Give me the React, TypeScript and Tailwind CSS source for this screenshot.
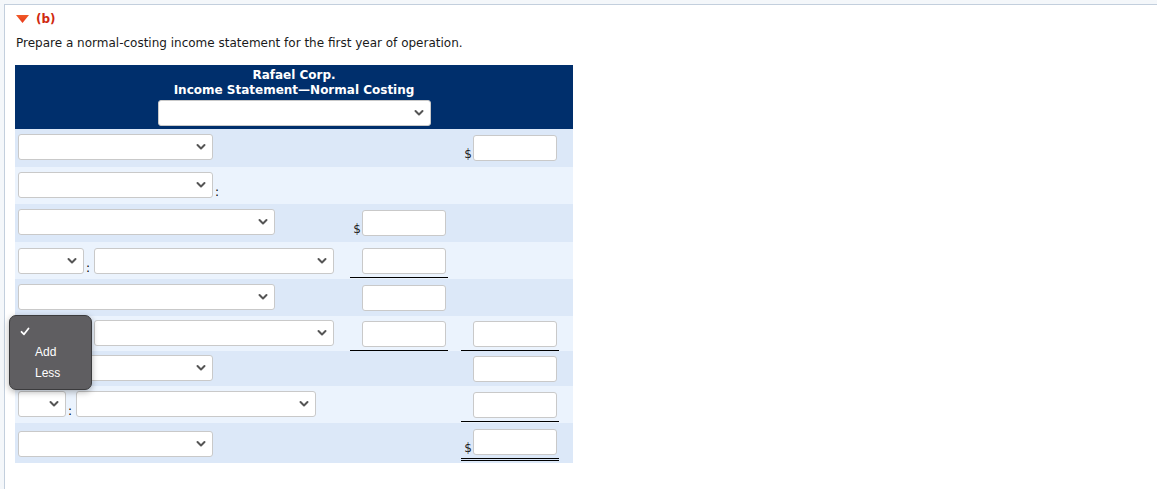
import React from "react";

const font = { fontFamily: "Verdana, 'DejaVu Sans', sans-serif" };

function Chevron() {
  return (
    <svg width="10" height="7" viewBox="0 0 10 7" className="absolute right-[6px] top-1/2 -translate-y-1/2">
      <path d="M1.5 1.5 L5 5 L8.5 1.5" fill="none" stroke="#555" strokeWidth="2" strokeLinecap="round" strokeLinejoin="round" />
    </svg>
  );
}

function Select({ w }: { w: string }) {
  return (
    <div className={`relative h-[26px] ${w} rounded-[3px] border border-[#c9c9c9] bg-white`}>
      <Chevron />
    </div>
  );
}

function Input() {
  return <div className="h-[26px] w-[84px] rounded-[3px] border border-[#c9c9c9] bg-white" />;
}

type Cell = { input?: boolean; dollar?: boolean; line?: "single" | "double" };

function Amount({ c }: { c?: Cell }) {
  return (
    <div className="flex w-[100px] flex-col items-stretch">
      <div className="flex h-[32px] items-end justify-end pr-[3px]">
        {c?.dollar && <span className="mr-[1px] text-[12px] leading-[14px] text-[#222]">$</span>}
        {c?.input && <Input />}
      </div>
      <div
        className={`mx-[1px] mt-[3px] ${
          c?.line === "single" ? "border-t border-black" : c?.line === "double" ? "h-[3px] border-y border-black" : ""
        }`}
      />
    </div>
  );
}

type Row = { h: string; dark: boolean; left: React.ReactNode; b?: Cell; c?: Cell; pt: string };

function Pair({ small }: { small: string }) {
  return (
    <div className="flex">
      <Select w={small} />
      <span className="mx-[2px] self-end text-[12px] leading-[12px] text-black">:</span>
      <div className="ml-[2px]">
        <Select w="w-[240px]" />
      </div>
    </div>
  );
}

export default function App() {
  const rows: Row[] = [
    { h: "h-[38px]", pt: "pt-[5px]", dark: true, left: <Select w="w-[195px]" />, c: { input: true, dollar: true } },
    {
      h: "h-[37px]",
      pt: "pt-[5px]",
      dark: false,
      left: (
        <div className="flex">
          <Select w="w-[195px]" />
          <span className="mx-[2px] self-end text-[12px] leading-[12px] text-black">:</span>
        </div>
      ),
    },
    { h: "h-[38px]", pt: "pt-[5px]", dark: true, left: <Select w="w-[257px]" />, b: { input: true, dollar: true } },
    { h: "h-[37px]", pt: "pt-[6px]", dark: false, left: <Pair small="w-[66px]" />, b: { input: true, line: "single" } },
    { h: "h-[37px]", pt: "pt-[5px]", dark: true, left: <Select w="w-[257px]" />, b: { input: true } },
    {
      h: "h-[35px]",
      pt: "pt-[4px]",
      dark: false,
      left: <Pair small="w-[66px]" />,
      b: { input: true, line: "single" },
      c: { input: true, line: "single" },
    },
    { h: "h-[35px]", pt: "pt-[4px]", dark: true, left: <Select w="w-[195px]" />, c: { input: true } },
    { h: "h-[37px]", pt: "pt-[5px]", dark: false, left: <Pair small="w-[48px]" />, c: { input: true, line: "single" } },
    {
      h: "h-[40px]",
      pt: "pt-[5px]",
      dark: true,
      left: <div className="pt-[3px]"><Select w="w-[195px]" /></div>,
      c: { input: true, dollar: true, line: "double" },
    },
  ];

  return (
    <div className="min-h-screen bg-[#f4f7fa] pl-[4px] pt-[4px]" style={font}>
      <div className="relative min-h-[485px] border-l border-t border-[#c3cfdd] bg-white pl-[10px]">
        <div className="mt-[7px] flex h-[14px] items-center pl-[1px]">
          <svg width="13" height="8" viewBox="0 0 13 8" className="mr-[7px]">
            <defs>
              <linearGradient id="tri" x1="0" y1="0" x2="0" y2="1">
                <stop offset="0" stopColor="#f05a28" />
                <stop offset="1" stopColor="#e8391a" />
              </linearGradient>
            </defs>
            <path d="M0 0 H13 L6.5 8 Z" fill="url(#tri)" />
          </svg>
          <span className="text-[12px] font-bold leading-[14px] text-[#d0290f]">(b)</span>
        </div>
        <div className="mt-[9px] pl-[1px] text-[12px] leading-[16px] text-[#1a1a1a]">
          Prepare a normal-costing income statement for the first year of operation.
        </div>

        <div className="mt-[14px] w-[558px]">
          <div className="flex flex-col items-center bg-[#002f6c] pb-[3px] pt-[3px] text-[12px] font-bold leading-[15px] text-white">
            <div>Rafael Corp.</div>
            <div>Income Statement—Normal Costing</div>
            <div className="mt-[2px]">
              <Select w="w-[273px]" />
            </div>
          </div>
          {rows.map((r, i) => (
            <div key={i} className={`flex ${r.h} ${r.dark ? "bg-[#dce8f8]" : "bg-[#ebf3fd]"}`}>
              <div className={`w-[334px] pl-[3px] ${r.pt}`}>{r.left}</div>
              <div className={r.pt === "pt-[4px]" ? "-mt-[1px]" : ""}>
                <Amount c={r.b} />
              </div>
              <div className={`ml-[11px] ${r.pt === "pt-[4px]" ? "-mt-[1px]" : ""}`}>
                <Amount c={r.c} />
              </div>
            </div>
          ))}
        </div>

        <div
          className="absolute left-[4px] top-[310px] h-[75px] w-[83px] rounded-[7px] border border-[#3b3b3d] bg-[#5f5e61] text-white shadow-[0_2px_6px_rgba(0,0,0,0.3)]"
          style={{ fontFamily: "'Liberation Sans', Arial, sans-serif" }}
        >
          <svg width="10" height="9" viewBox="0 0 10 9" className="absolute left-[10px] top-[11px]">
            <path d="M1.5 4.8 L4 7.3 L8.5 1.5" fill="none" stroke="white" strokeWidth="1.8" strokeLinecap="round" strokeLinejoin="round" />
          </svg>
          <div className="absolute left-[25px] top-[29px] text-[12px] leading-[14px]">Add</div>
          <div className="absolute left-[25px] top-[50px] text-[12px] leading-[14px]">Less</div>
        </div>
      </div>
    </div>
  );
}
